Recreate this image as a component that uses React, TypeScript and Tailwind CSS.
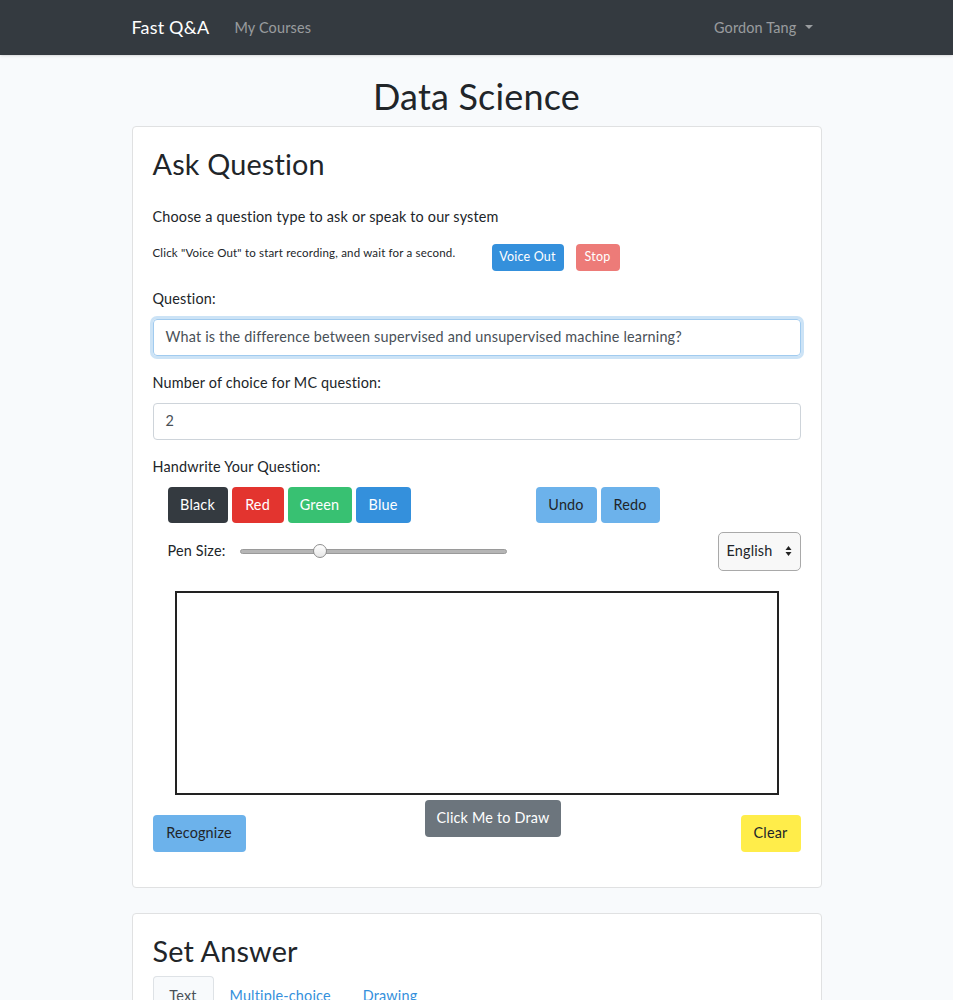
import React from 'react';

const font = { fontFamily: 'Lato, "Noto Sans", sans-serif', letterSpacing: '0.18px' };

const Btn = ({ className, children }: { className: string; children: React.ReactNode }) => (
  <button className={`inline-flex items-center justify-center rounded-[4px] ${className}`}>{children}</button>
);

export default function App() {
  return (
    <div className="min-h-screen bg-[#f8fafc] text-[#212529] text-[14.4px]" style={font}>
      {/* Navbar */}
      <nav className="h-[55px] bg-[#343a40] shadow-sm">
        <div className="w-[690px] mx-auto h-full flex items-center">
          <span className="text-[18px] text-white mr-[25px]">Fast Q&amp;A</span>
          <span className="text-[14.4px] text-white/50">My Courses</span>
          <div className="ml-auto mr-[9px] flex items-center gap-[8px] text-white/50">
            <span>Gordon Tang</span>
            <span className="w-0 h-0 border-l-[4px] border-r-[4px] border-t-[4px] border-l-transparent border-r-transparent border-t-white/50" />
          </div>
        </div>
      </nav>

      <main className="w-[690px] mx-auto">
        <h1 className="mt-[20px] mb-[8px] text-center text-[36px] leading-[43px]">Data Science</h1>

        {/* Ask Question card */}
        <section className="bg-white border border-[#e0e1e2] rounded-[4px] px-[20px] pt-[20px] pb-[35px]">
          <h2 className="text-[28.8px] leading-[34.5px]">Ask Question</h2>
          <p className="mt-[23px] leading-[23px]">Choose a question type to ask or speak to our system</p>

          <div className="mt-[16px] flex items-start">
            <span className="w-[339px] text-[11.5px] leading-[18px]">Click "Voice Out" to start recording, and wait for a second.</span>
            <Btn className="h-[27px] w-[72px] bg-[#3490dc] text-white text-[12.5px]">Voice Out</Btn>
            <Btn className="ml-[12px] h-[27px] w-[44px] bg-[#ed7b78] text-white text-[12.5px]">Stop</Btn>
          </div>

          <label className="block mt-[16.5px] leading-[23px]">Question:</label>
          <div className="mt-[8.5px] h-[37px] flex items-center px-[12px] border border-[#a1cbef] rounded-[4px] shadow-[0_0_0_3px_rgba(52,144,220,0.25)] text-[#495057]">
            What is the difference between supervised and unsupervised machine learning?
          </div>

          <label className="block mt-[15.5px] leading-[23px]">Number of choice for MC question:</label>
          <div className="mt-[8.5px] h-[37px] flex items-center px-[12px] border border-[#ced4da] rounded-[4px] text-[#495057]">2</div>

          <label className="block mt-[15.5px] leading-[23px]">Handwrite Your Question:</label>

          <div className="mt-[8.5px] pl-[15px] flex">
            <div className="flex gap-[4px]">
              <Btn className="h-[36px] w-[60px] bg-[#343a40] text-white">Black</Btn>
              <Btn className="h-[36px] w-[52px] bg-[#e3342f] text-white">Red</Btn>
              <Btn className="h-[36px] w-[64px] bg-[#38c172] text-white">Green</Btn>
              <Btn className="h-[36px] w-[55px] bg-[#3490dc] text-white">Blue</Btn>
            </div>
            <div className="ml-[125px] flex gap-[4px]">
              <Btn className="h-[36px] w-[61px] bg-[#6cb2eb] text-[#212529]">Undo</Btn>
              <Btn className="h-[36px] w-[59px] bg-[#6cb2eb] text-[#212529]">Redo</Btn>
            </div>
          </div>

          <div className="mt-[9px] pl-[15px] flex items-center h-[39px]">
            <span className="w-[72px]">Pen Size:</span>
            <div className="relative w-[267px] h-[14px] flex items-center">
              <div className="w-full h-[5px] rounded-full bg-[#b5b5b5] border border-[#9a9a9a]" />
              <div className="absolute left-[73px] top-0 w-[14px] h-[14px] rounded-full bg-gradient-to-b from-white to-[#e6e6e6] border border-[#8f8f8f]" />
            </div>
            <div className="ml-auto h-[39px] w-[83px] flex items-center justify-between pl-[8px] pr-[8px] border border-[#a9a9a9] rounded-[5px] bg-[#f8f8f8] text-[14.4px]">
              <span>English</span>
              <svg width="7" height="12" viewBox="0 0 7 12">
                <path d="M3.5 1 L6.5 5 H0.5 Z M3.5 11 L6.5 7 H0.5 Z" fill="#222" />
              </svg>
            </div>
          </div>

          <div className="mt-[20px] mx-auto w-[604px] h-[204px] border-2 border-[#222] bg-white" />

          <div className="flex justify-between items-start">
            <Btn className="mt-[20px] h-[37px] w-[93px] bg-[#6cb2eb] text-[#212529]">Recognize</Btn>
            <Btn className="mt-[5px] h-[37px] w-[136px] bg-[#6c757d] text-white">Click Me to Draw</Btn>
            <Btn className="mt-[20px] h-[37px] w-[60px] bg-[#ffed4a] text-[#212529]">Clear</Btn>
          </div>
        </section>

        {/* Set Answer card */}
        <section className="mt-[25px] bg-white border border-[#e0e1e2] rounded-[4px] px-[20px] pt-[20px] pb-[20px]">
          <h2 className="text-[28.8px] leading-[34.5px]">Set Answer</h2>
          <div className="mt-[8px] flex border-b border-[#dee2e6]">
            <span className="-mb-px h-[40px] w-[61px] flex items-center justify-center border border-[#dee2e6] border-b-white rounded-t-[4px] bg-[#f8fafc] text-[#495057]">Text</span>
            <span className="h-[40px] px-[16px] flex items-center text-[#3490dc]">Multiple-choice</span>
            <span className="h-[40px] px-[16px] flex items-center text-[#3490dc]">Drawing</span>
          </div>
          <div className="h-[120px]" />
        </section>
      </main>
    </div>
  );
}
